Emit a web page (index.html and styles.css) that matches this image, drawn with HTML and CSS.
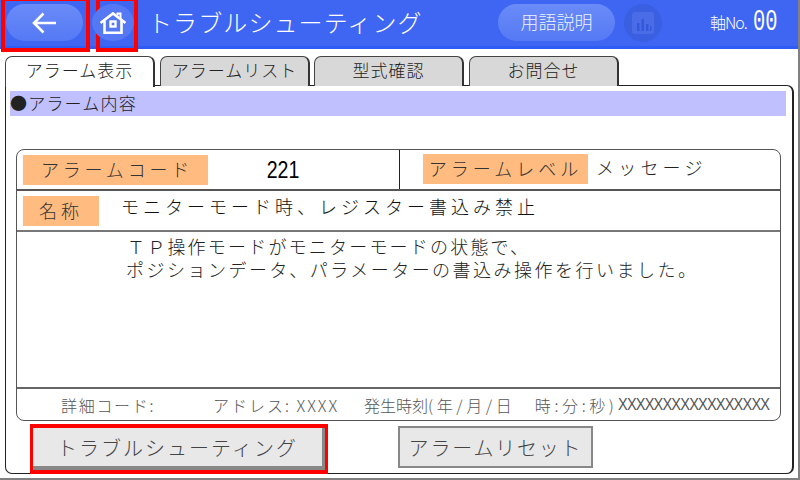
FILE: index.html
```html
<!DOCTYPE html>
<html lang="ja">
<head>
<meta charset="utf-8">
<title>トラブルシューティング</title>
<link rel="stylesheet" href="styles.css">
</head>
<body>
<div class="screen">
  <header class="header">
    <div class="mark mark-back">
      <div class="pill pill-back">
        <svg class="icon-back" viewBox="0 0 28 24" width="28" height="24"><path d="M25 12H3M12.500 2.500L3 12l9.500 9.500" fill="none" stroke="#fff" stroke-width="2.600"/></svg>
      </div>
    </div>
    <div class="mark mark-home">
      <div class="pill-home">
        <svg viewBox="0 0 26 24" width="26" height="24"><path d="M17.500 4.500V2.500H20.500V8" fill="none" stroke="#fff" stroke-width="2"/><path d="M0.500 12L13 2.500 25.500 12" fill="none" stroke="#fff" stroke-width="2.600"/><path d="M4.500 9.500V21.800H21.500V9.500" fill="none" stroke="#fff" stroke-width="2.600"/><rect x="10.500" y="10.500" width="5" height="5" fill="none" stroke="#fff" stroke-width="2.400"/></svg>
      </div>
    </div>
    <h1 class="title">トラブルシューティング</h1>
    <div class="pill pill-term">用語説明</div>
    <div class="chart-btn">
      <svg viewBox="0 0 24 24" width="24" height="24"><rect x="1" y="1" width="22" height="22" rx="3" fill="#4a6ce6"/><path d="M6 12h2.500v8H6zM10.500 8h2.500v12h-2.500zM15 13h2.500v7H15zM19 15h1.500v5H19z" fill="#3358dc"/></svg>
    </div>
    <div class="axis"><span class="axis-label">軸No.</span><span class="axis-no">00</span></div>
  </header>

  <main class="body">
    <nav class="tabs">
      <div class="tab tab-on">アラーム表示</div>
      <div class="tab tab-list">アラームリスト</div>
      <div class="tab tab-model">型式確認</div>
      <div class="tab tab-ask">お問合せ</div>
    </nav>
    <section class="panel">
      <div class="band">●アラーム内容</div>
      <div class="card">
        <div class="row row-top">
          <div class="cell cell-code">
            <span class="tag tag-code">アラームコード</span>
            <span class="code">221</span>
          </div>
          <div class="cell cell-level">
            <span class="tag tag-level">アラームレベル</span>
            <span class="level">メッセージ</span>
          </div>
        </div>
        <div class="row row-name">
          <span class="tag tag-name">名称</span>
          <span class="name">モニターモード時、レジスター書込み禁止</span>
        </div>
        <div class="detail">
          <p class="line line-1">ＴＰ操作モードがモニターモードの状態で、</p>
          <p class="line">ポジションデータ、パラメーターの書込み操作を行いました。</p>
        </div>
        <div class="foot">
          <span class="foot-code">詳細コード:</span>
          <span class="foot-addr">アドレス: XXXX</span>
          <span class="foot-time">発生時刻</span><span class="foot-date">(年/月/日　時:分:秒)</span>
          <span class="foot-x">XXXXXXXXXXXXXXXXX</span>
        </div>
      </div>
      <div class="actions">
        <div class="mark-btn"><button class="btn btn-trouble">トラブルシューティング</button></div>
        <button class="btn btn-reset">アラームリセット</button>
      </div>
    </section>
  </main>
</div>
</body>
</html>
```
FILE: styles.css
```css
* { box-sizing: border-box; }
html, body { margin: 0; padding: 0; }
body {
  width: 800px;
  height: 480px;
  overflow: hidden;
  background: #fff;
  font-family: "Noto Sans CJK JP", "Liberation Sans", sans-serif;
  font-weight: 300;
  color: #222;
}
.screen {
  width: 800px;
  height: 480px;
  display: flex;
  flex-direction: column;
  border-right: 2px solid #808080;
  border-bottom: 2px solid #808080;
}
.header {
  height: 49px;
  flex: none;
  display: flex;
  align-items: flex-start;
  background: linear-gradient(#3f66f2, #3f66f2 46px, #2f5cf5 46px);
  color: #fff;
  padding-left: 1px;
}
.mark {
  height: 55px;
  margin-top: -3px;
  padding-top: 3px;
  border: 4px solid #f00;
  position: relative;
  z-index: 2;
  flex: none;
  display: flex;
  align-items: flex-start;
}
.mark-back { width: 89px; padding-left: 1px; }
.mark-home { width: 42px; margin-left: 6px; }
.pill {
  background: linear-gradient(#6a8bf8, #5579f5);
  border-radius: 19px;
  display: flex;
  align-items: center;
  justify-content: center;
}
.pill-back { width: 77px; height: 37px; }
.pill-home {
  width: 42px;
  height: 37px;
  margin-left: -8px;
  border-radius: 50%;
  background: #5579f5;
  flex: none;
  display: flex;
  align-items: center;
  justify-content: center;
}
.title {
  margin: 0 0 0 10px;
  width: 350px;
  height: 43px;
  font-size: 24px;
  line-height: 43px;
  font-weight: 300;
  white-space: nowrap;
  letter-spacing: 1.100px;
}
.pill-term {
  width: 117px;
  height: 37px;
  margin-top: 4px;
  padding-bottom: 3px;
  font-size: 18px;
  color: #eef2ff;
}
.chart-btn {
  width: 38px;
  height: 38px;
  margin: 4px 0 0 9px;
  border-radius: 50%;
  background: #3a5fe0;
  display: flex;
  align-items: center;
  justify-content: center;
}
.chart-btn svg { width: 24px; height: 24px; }
.axis {
  margin: 4px 0 0 48px;
  height: 36px;
  display: flex;
  align-items: center;
  gap: 5px;
  white-space: nowrap;
}
.axis-label { font-size: 16px; letter-spacing: -1px; }
.axis-no {
  font-family: "Liberation Mono", monospace;
  font-size: 30px;
  line-height: 38px;
  margin-left: 1px;
  transform: scaleX(0.68);
  transform-origin: left;
}

.body {
  flex: 1;
  min-height: 0;
  padding: 7px 4px 4px 5px;
  display: flex;
  flex-direction: column;
}
.tabs {
  display: flex;
  height: 30px;
  flex: none;
  position: relative;
  z-index: 1;
  font-size: 17px;
}
.tab {
  height: 30px;
  width: 150px;
  border: 1px solid #444;
  border-bottom: none;
  border-radius: 7px 7px 0 0;
  background: #d8d8d8;
  text-align: center;
  line-height: 26px;
  white-space: nowrap;
  letter-spacing: 1px;
  border-right: 2px solid #333;
}
.tab-on { background: #fff; margin-right: 5px; position: relative; height: 31px; z-index: 2; }
.tab-list { margin-right: 4px; }
.tab-model { margin-right: 5px; }
.panel {
  flex: 1;
  min-height: 0;
  margin-top: -1px;
  border: 1px solid #222;
  border-right: 2px solid #222;
  border-radius: 0 7px 7px 7px;
  padding: 5px 6px 0 4px;
  display: flex;
  flex-direction: column;
}
.band {
  height: 25px;
  flex: none;
  background: #c0c0ff;
  font-size: 17px;
  line-height: 23px;
  letter-spacing: 1.200px;
  color: #222;
}
.card {
  height: 272px;
  flex: none;
  margin: 33px 5px 0 6px;
  border: 1px solid #555;
  border-radius: 8px;
  display: flex;
  flex-direction: column;
}
.row {
  flex: none;
  display: flex;
  border-bottom: 2px solid #555;
}
.row-top { height: 41px; }
.row-name { height: 41px; padding: 5px 0 0 6px; border-bottom-color: #777; }
.cell { display: flex; height: 100%; padding-top: 5px; }
.cell-code { width: 383px; padding-left: 6px; border-right: 1px solid #222; }
.cell-level { padding: 4px 0 0 23px; }
.tag {
  background: #ffbb80;
  height: 30px;
  font-size: 18px;
  line-height: 28px;
  text-align: center;
  white-space: nowrap;
  flex: none;
  color: #333;
}
.tag-code { width: 185px; letter-spacing: 3.800px; padding-left: 3px; }
.tag-level { width: 165px; letter-spacing: 4px; }
.tag-name { width: 76px; letter-spacing: 4px; }
.code {
  width: 150px;
  text-align: center;
  font-family: "Liberation Sans", sans-serif;
  font-weight: 400;
  font-size: 23px;
  line-height: 30px;
  color: #000;
  transform: scaleX(0.85);
}
.level {
  margin-left: 8px;
  font-size: 18px;
  line-height: 26px;
  letter-spacing: 4.200px;
  color: #222;
  white-space: nowrap;
}
.name {
  margin: -3px 0 0 22px;
  font-size: 18px;
  line-height: 26px;
  letter-spacing: 4px;
  color: #111;
  white-space: nowrap;
}
.detail {
  height: 157px;
  flex: none;
  padding: 3px 0 0 109px;
  border-bottom: 2px solid #666;
  font-size: 18px;
  line-height: 23px;
  color: #222;
  letter-spacing: 2.480px;
}
.line { margin: 0; white-space: nowrap; }
.line-1 { padding-left: 1px; letter-spacing: 2.200px; }
.foot {
  flex: 1;
  display: flex;
  align-items: center;
  padding-left: 44px;
  font-size: 16px;
  color: #555;
  white-space: nowrap;
}
.foot span { flex: none; }
.foot-code { width: 152px; letter-spacing: 1.700px; }
.foot-addr { width: 151px; letter-spacing: 2px; }
.foot-date { letter-spacing: 3.600px; }
.foot-x {
  width: 152px;
  font-family: "Liberation Sans", sans-serif;
  font-size: 16px;
  letter-spacing: -0.900px;
  transform: scaleX(0.91);
  transform-origin: left;
}
.actions {
  display: flex;
  align-items: flex-start;
  margin: 3px 0 0 20px;
}
.mark-btn {
  width: 298px;
  height: 50px;
  border: 4px solid #f00;
  flex: none;
  padding: 0;
}
.btn {
  display: block;
  height: 42px;
  background: #e8e8e8;
  border: 2px solid #888;
  font: inherit;
  font-size: 20px;
  color: #444;
  padding: 0;
  white-space: nowrap;
}
.btn-trouble {
  width: 292px;
  letter-spacing: 2px;
  border-color: #e8e8e8 #888 #888 #e8e8e8;
  border-width: 0 3px 4px 0;
  margin-left: -1px;
}
.btn-reset { width: 195px; margin: 2px 0 0 70px; letter-spacing: 1.800px; }
```
